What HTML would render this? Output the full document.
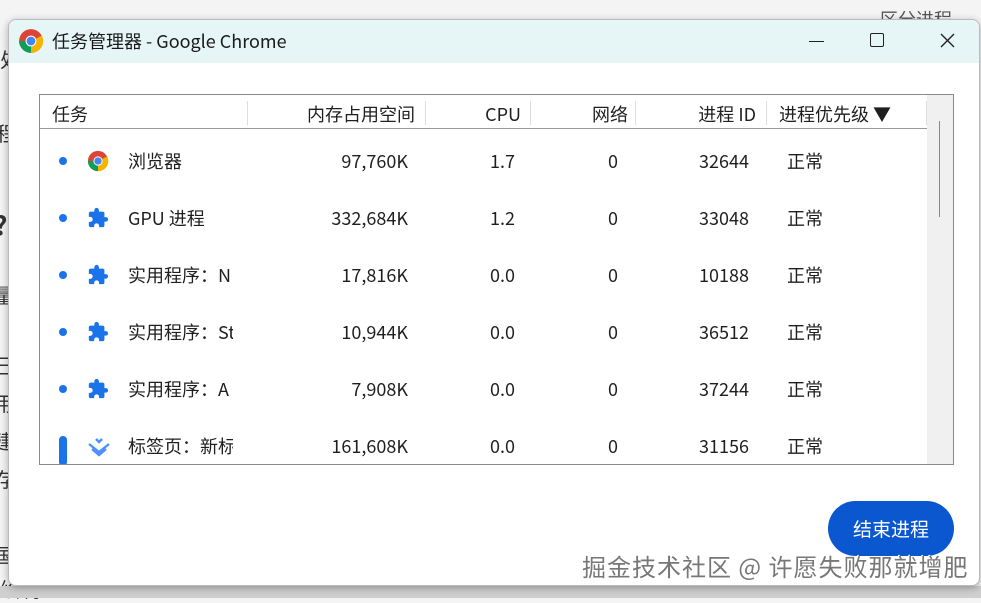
<!DOCTYPE html>
<html><head><meta charset="utf-8"><style>
*{margin:0;padding:0;box-sizing:border-box}
body{width:981px;height:598px;overflow:hidden;background:#f4f4f4;position:relative;font-family:"Noto Sans CJK SC",sans-serif;color:#1f1f1f}
.abs{position:absolute;white-space:nowrap}
.bgt{position:absolute;font-size:20px;color:#333;font-family:"Noto Sans CJK SC",sans-serif}
.win{position:absolute;left:8px;top:19px;width:972px;height:567px;background:#fff;border-radius:8px;border:1px solid #bbb;box-shadow:0 2px 8px rgba(0,0,0,.3);overflow:hidden}
.title{position:absolute;left:0;top:0;width:100%;height:43px;background:#e6f6f6}
.tbl{position:absolute;left:30px;top:74px;width:915px;height:371px;border:1px solid #8a8a8a;overflow:hidden}
.hd{position:absolute;top:0;left:0;width:887px;height:34px;border-bottom:1px solid #999}
.sep{position:absolute;top:6px;width:1px;height:24px;background:#ddd}
.sb{position:absolute;right:0;top:0;width:26px;height:100%;background:#f0f0f0}
.cell{position:absolute;font-size:18px;line-height:24px;height:24px;white-space:nowrap;font-family:"Noto Sans CJK SC",sans-serif}
.dot{position:absolute;width:8px;height:8px;border-radius:50%;background:#1a73e8}
.btn{position:absolute;left:819px;top:481px;width:126px;height:55px;border-radius:28px;background:#0b57d0;color:#fff;font-size:19px;text-align:center;line-height:55px;font-family:"Noto Sans CJK SC",sans-serif}
</style></head><body>
<div class="bgt" style="left:0;top:44px">处</div>
<div class="bgt" style="left:-4px;top:118px">程</div>
<div class="bgt" style="left:-6px;top:206px;font-weight:bold;font-size:26px">?</div>
<div class="bgt" style="left:-6px;top:280px">量</div>
<div class="bgt" style="left:-6px;top:350px">已</div>
<div class="bgt" style="left:-6px;top:388px">用</div>
<div class="bgt" style="left:-6px;top:426px">建</div>
<div class="bgt" style="left:-6px;top:464px">存</div>
<div class="bgt" style="left:-6px;top:540px">国</div>
<div class="bgt" style="left:0;top:574px;font-size:20px">绘制差</div>
<div class="bgt" style="left:880px;top:6px;font-size:18px;color:#555">区分进程</div>
<div style="position:absolute;left:0;top:586px;width:981px;height:12px;background:#cfcfcf"></div>
<div class="win">
 <div class="title">
  <svg class="abs" style="left:9px;top:8px" width="26" height="26" viewBox="0 0 24 24"><circle cx="12" cy="12" r="11" fill="#db4437"/><path d="M12 12 L1 12 A11 11 0 0 0 12 23 Z" fill="#0f9d58"/><path d="M12 12 L22 7 A11 11 0 0 1 12 23Z" fill="#f4b400"/><circle cx="12" cy="12" r="5" fill="#fff"/><circle cx="12" cy="12" r="4" fill="#4285f4"/></svg>
  <div class="abs" style="left:43px;top:9px;font-size:18px;line-height:24px;font-family:'Noto Sans CJK SC',sans-serif;color:#1a1a1a">任务管理器 - Google Chrome</div>
  <div class="abs" style="left:800px;top:21px;width:15px;height:1px;background:#222"></div>
  <div class="abs" style="left:861px;top:13px;width:14px;height:14px;border:1.5px solid #222;border-radius:2px"></div>
  <svg class="abs" style="left:931px;top:13px" width="15" height="15"><path d="M1 1L14 14M14 1L1 14" stroke="#222" stroke-width="1.4"/></svg>
 </div>
 <div class="tbl">
  <div class="hd">
   <div class="cell" style="left:12px;top:7px">任务</div>
   <div class="sep" style="left:207px"></div>
   <div class="cell" style="right:512px;top:7px">内存占用空间</div>
   <div class="sep" style="left:385px"></div>
   <div class="cell" style="right:406px;top:7px">CPU</div>
   <div class="sep" style="left:490px"></div>
   <div class="cell" style="right:299px;top:7px">网络</div>
   <div class="sep" style="left:595px"></div>
   <div class="cell" style="right:171px;top:7px">进程 ID</div>
   <div class="sep" style="left:726px"></div>
   <div class="cell" style="left:739px;top:7px">进程优先级 ▼</div>
   <div class="sep" style="left:886px"></div>
  </div>
  <div class="sb"><div style="position:absolute;left:12px;top:26px;width:1px;height:96px;background:#888"></div></div>
  <div id="rows"></div>
 </div>
 <div class="btn">结束进程</div>
</div>
<div class="abs" style="left:582px;top:548px;font-size:24px;letter-spacing:1px;color:#777;font-family:'Noto Sans CJK SC',sans-serif;text-shadow:1px 1px 0 #fff,-1px -1px 0 #fff">掘金技术社区 @ 许愿失败那就增肥</div>
<script>
var rows=[["浏览器","97,760K","1.7","32644","c"],["GPU 进程","332,684K","1.2","33048","p"],["实用程序：N","17,816K","0.0","10188","p"],["实用程序：St","10,944K","0.0","36512","p"],["实用程序：A","7,908K","0.0","37244","p"],["标签页：新标","161,608K","0.0","31156","t"]];
var h="";
var chrome='<svg width="22" height="22" viewBox="0 0 24 24"><circle cx="12" cy="12" r="11" fill="#db4437"/><path d="M12 12 L1 12 A11 11 0 0 0 12 23 Z" fill="#0f9d58"/><path d="M12 12 L22 7 A11 11 0 0 1 12 23Z" fill="#f4b400"/><circle cx="12" cy="12" r="5" fill="#fff"/><circle cx="12" cy="12" r="4" fill="#4285f4"/></svg>';
var puz='<svg width="22" height="22" viewBox="0 0 24 24"><path fill="#1a73e8" d="M20.5 11H19V7a2 2 0 0 0-2-2h-4V3.5a2.5 2.5 0 0 0-5 0V5H4a2 2 0 0 0-2 2v3.8h1.5a2.7 2.7 0 0 1 0 5.4H2V20a2 2 0 0 0 2 2h3.8v-1.5a2.7 2.7 0 0 1 5.4 0V22H17a2 2 0 0 0 2-2v-4h1.5a2.5 2.5 0 0 0 0-5z"/></svg>';
var tab='<svg width="24" height="24" viewBox="0 0 24 24"><path d="M9 4l3 3 3-3M2 9l10 8 10-8M5 14l7 6 7-6" fill="none" stroke="#4d90fe" stroke-width="2.4"/></svg>';
rows.forEach(function(r,i){var y=30+i*57;
 var ic=r[4]=="c"?chrome:r[4]=="p"?puz:tab;
 if(r[4]=="t") h+='<div style="position:absolute;left:19px;top:'+(y+26)+'px;width:8px;height:30px;border-radius:4px;background:#1a73e8"></div>';
 else h+='<div class="dot" style="left:19px;top:'+(y+32)+'px"></div>';
 h+='<div style="position:absolute;left:47px;top:'+(y+25)+'px">'+ic+'</div>';
 h+='<div class="cell" style="left:88px;top:'+(y+24)+'px;width:105px;overflow:hidden">'+r[0]+'</div>';
 h+='<div class="cell" style="right:545px;top:'+(y+24)+'px">'+r[1]+'</div>';
 h+='<div class="cell" style="left:450px;top:'+(y+24)+'px">'+r[2]+'</div>';
 h+='<div class="cell" style="left:568px;top:'+(y+24)+'px">0</div>';
 h+='<div class="cell" style="right:204px;top:'+(y+24)+'px">'+r[3]+'</div>';
 h+='<div class="cell" style="left:747px;top:'+(y+24)+'px">正常</div>';
});
document.getElementById("rows").outerHTML=h;
</script>
</body></html>
